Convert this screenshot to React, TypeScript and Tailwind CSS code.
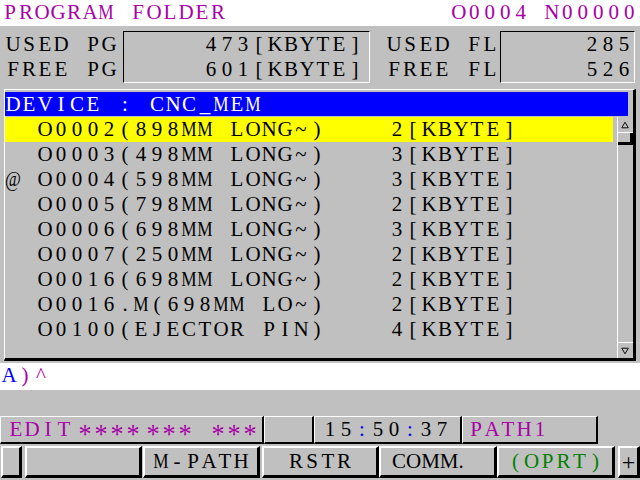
import React from 'react'

// FANUC style screen: every character sits in a 16px cell
function Cells({
  text,
  className = '',
  cell = 'w-4',
  glyph = '',
}: {
  text: string
  className?: string
  cell?: string
  glyph?: string
}) {
  return (
    <span className={`flex ${className}`}>
      {Array.from(text).map((ch, i) => (
        <span
          key={i}
          className={`flex shrink-0 justify-center ${cell} ${glyph} ${ch === 'M' || ch === '@' ? 'scale-x-[0.82]' : ''}`}
        >
          {ch === ' ' ? '' : ch}
        </span>
      ))}
    </span>
  )
}

interface FileRow {
  mark: string
  name: string
  size: number
  sel?: boolean
}

const FILES: FileRow[] = [
  { mark: ' ', name: 'O0002(898MM LONG~)', size: 2, sel: true },
  { mark: ' ', name: 'O0003(498MM LONG~)', size: 3 },
  { mark: '@', name: 'O0004(598MM LONG~)', size: 3 },
  { mark: ' ', name: 'O0005(798MM LONG~)', size: 2 },
  { mark: ' ', name: 'O0006(698MM LONG~)', size: 3 },
  { mark: ' ', name: 'O0007(250MM LONG~)', size: 2 },
  { mark: ' ', name: 'O0016(698MM LONG~)', size: 2 },
  { mark: ' ', name: 'O0016.M(698MM LO~)', size: 2 },
  { mark: ' ', name: 'O0100(EJECTOR PIN)', size: 4 },
]

const RAISED =
  'border-t border-l border-t-white border-l-white border-r-2 border-b-2 border-r-black border-b-black'
const KEY =
  'flex justify-center pt-px border-t-2 border-l-2 border-t-white border-l-white border-r-[3px] border-b-[3px] border-r-black border-b-black'
const SUNKEN =
  'flex flex-col border-t border-l border-t-black border-l-black border-b border-r border-b-white border-r-white'

function Arrow({ down }: { down?: boolean }) {
  return (
    <svg width="16" height="14" viewBox="0 0 16 14">
      <polygon
        points={down ? '4,4 11,4 7.5,10' : '7.5,4 4,10 11,10'}
        fill="none"
        stroke="#000"
        strokeWidth="1"
      />
    </svg>
  )
}

export default function App() {
  return (
    <div className="w-[640px] h-[480px] overflow-hidden bg-[#c0c0c0] flex flex-col text-[21px] leading-[24px] text-black font-['Liberation_Serif',serif]">
      {/* title */}
      <div className="h-[26px] shrink-0 bg-white flex justify-between text-[#a800a8]">
        <Cells text="PROGRAM FOLDER" className="ml-[2px]" />
        <Cells text="O0004 N00000" cell="w-[15.5px]" className="mr-[3px]" />
      </div>

      {/* memory info */}
      <div className="flex shrink-0 pt-[5px] pb-[6px] pl-[5px]">
        <div className="w-[112px] mr-[6px] pt-px flex flex-col">
          <div className="h-[25px]"><Cells text="USED PG" /></div>
          <div className="h-[25px]"><Cells text="FREE PG" /></div>
        </div>
        <div className={`w-[247px] ${SUNKEN}`}>
          <div className="h-[25px] flex justify-end pr-[6px]"><Cells text="473[KBYTE]" /></div>
          <div className="h-[25px] flex justify-end pr-[6px]"><Cells text="601[KBYTE]" /></div>
        </div>
        <div className="w-[112px] ml-[16px] mr-[2px] pt-px flex flex-col">
          <div className="h-[25px]"><Cells text="USED FL" /></div>
          <div className="h-[25px]"><Cells text="FREE FL" /></div>
        </div>
        <div className={`w-[135px] ${SUNKEN}`}>
          <div className="h-[25px] flex justify-end pr-[2px]"><Cells text="285" /></div>
          <div className="h-[25px] flex justify-end pr-[2px]"><Cells text="526" /></div>
        </div>
      </div>

      {/* program list */}
      <div className="ml-[4px] w-[632px] h-[272px] shrink-0 pt-[2px] flex flex-col border-t border-l border-t-white border-l-white border-r-[3px] border-b-[3px] border-r-black border-b-black">
        <div className="flex h-[24px]">
          <div className="w-[623px] h-[24px] bg-[#0000ff] text-white">
            <Cells text="DEVICE : CNC_MEM" />
          </div>
        </div>
        <div className="flex mt-px h-[241px]">
          <div className="w-[608px] flex flex-col">
            {FILES.map(f => (
              <div key={f.name} className={`h-[25px] ${f.sel ? 'bg-[#ffff00]' : ''}`}>
                <Cells text={`${f.mark} ${f.name}    ${f.size}[KBYTE]`} />
              </div>
            ))}
          </div>
          {/* scrollbar */}
          <div className="ml-[4px] w-[16px] flex flex-col border-l border-l-white">
            <div className="h-[16px] flex items-center justify-center border-b border-b-white">
              <Arrow />
            </div>
            <div className="h-[12px] border-r-[3px] border-b-[3px] border-r-black border-b-black" />
            <div className="flex-1" />
            <div className="h-[16px] flex items-center justify-center border-t border-t-white">
              <Arrow down />
            </div>
          </div>
        </div>
      </div>

      {/* key-in line */}
      <div className="mt-[2px] h-[27px] shrink-0 bg-white flex">
        <Cells text="A" className="ml-px text-[#0000ff]" />
        <Cells text=")^" className="text-[#a800a8]" />
      </div>

      {/* status row */}
      <div className="mt-[26px] h-[28px] shrink-0 flex">
        <div className={`w-[264px] flex text-[#a800a8] ${RAISED}`}>
          <Cells text="EDIT" className="ml-[7px]" />
          <Cells text="****" className="ml-[5px]" glyph="translate-y-[5px] scale-125" />
          <Cells text="***" className="ml-[4px]" glyph="translate-y-[5px] scale-125" />
          <Cells text="***" className="ml-[17px]" glyph="translate-y-[5px] scale-125" />
        </div>
        <div className={`w-[50px] ${RAISED}`} />
        <div className={`w-[148px] flex ${RAISED}`}>
          <Cells text="15" className="ml-[7px]" />
          <Cells text=":" className="text-[#0000ff]" />
          <Cells text="50" />
          <Cells text=":" className="text-[#0000ff]" />
          <Cells text="37" />
        </div>
        <div className={`w-[136px] flex text-[#a800a8] ${RAISED}`}>
          <Cells text="PATH1" className="ml-[5px]" />
        </div>
      </div>

      {/* soft keys */}
      <div className="mt-[2px] h-[32px] shrink-0 flex">
        <div className={`ml-px w-[21px] ${KEY}`} />
        <div className={`ml-[3px] w-[117px] ${KEY}`} />
        <div className={`ml-px w-[117px] ${KEY}`}>
          <Cells text="M-PATH" />
        </div>
        <div className={`ml-[2px] w-[117px] ${KEY}`}>
          <Cells text="RSTR" />
        </div>
        <div className={`w-[118px] ${KEY} justify-start`}>
          <span className="ml-[11px]">COMM.</span>
        </div>
        <div className={`w-[118px] text-[#008000] ${KEY}`}>
          <Cells text="(OPRT)" />
        </div>
        <div className={`ml-[3px] w-[22px] ${KEY}`}>
          <span className="text-[24px] leading-[26px]">+</span>
        </div>
      </div>
    </div>
  )
}
